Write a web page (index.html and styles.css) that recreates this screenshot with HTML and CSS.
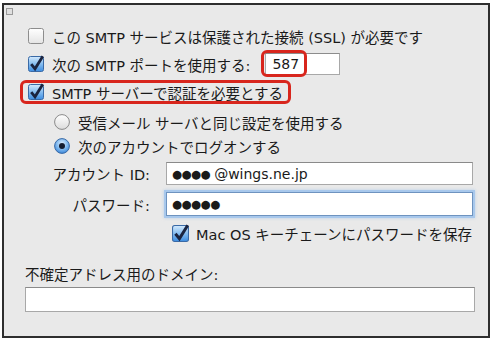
FILE: index.html
```html
<!DOCTYPE html>
<html lang="ja">
<head>
<meta charset="utf-8">
<link rel="stylesheet" href="styles.css">
</head>
<body>
<div class="window">
  <div class="titlebar"><span class="corner"></span></div>

  <div class="row r1">
    <svg class="cb" width="16" height="16" viewBox="0 0 16 16"><defs><linearGradient id="w1" x1="0" y1="0" x2="0" y2="1"><stop offset="0" stop-color="#ffffff"/><stop offset="1" stop-color="#e4e4e4"/></linearGradient></defs><rect x="0.5" y="0.5" width="15" height="15" rx="2" fill="url(#w1)" stroke="#8d8d8d"/></svg>
    <span>この SMTP サービスは保護された接続 (SSL) が必要です</span>
  </div>

  <div class="row r2">
    <svg class="cb" width="16" height="16" viewBox="0 0 16 16" overflow="visible"><defs><linearGradient id="b1" x1="0" y1="0" x2="0" y2="1"><stop offset="0" stop-color="#d4eafd"/><stop offset="0.5" stop-color="#86bdf0"/><stop offset="1" stop-color="#3c8ce0"/></linearGradient></defs><rect x="0.5" y="0.5" width="15" height="15" rx="2" fill="url(#b1)" stroke="#3a6aa6"/><path d="M3.2 8.2 L7 12.8 L14.8 0.2" stroke="#1a2440" stroke-width="2.8" fill="none" stroke-linejoin="miter"/></svg>
    <span>次の SMTP ポートを使用する:</span>
    <span class="port"><span class="port-hl"></span>587</span>
  </div>

  <div class="row r3">
    <div class="hl-box">
      <svg class="cb" width="16" height="16" viewBox="0 0 16 16" overflow="visible"><defs><linearGradient id="b2" x1="0" y1="0" x2="0" y2="1"><stop offset="0" stop-color="#d4eafd"/><stop offset="0.5" stop-color="#86bdf0"/><stop offset="1" stop-color="#3c8ce0"/></linearGradient></defs><rect x="0.5" y="0.5" width="15" height="15" rx="2" fill="url(#b2)" stroke="#3a6aa6"/><path d="M3.2 8.2 L7 12.8 L14.8 0.2" stroke="#1a2440" stroke-width="2.8" fill="none"/></svg>
      <span>SMTP サーバーで認証を必要とする</span>
    </div>
  </div>

  <div class="row r4">
    <svg class="rb" width="16" height="16" viewBox="0 0 16 16"><defs><linearGradient id="w2" x1="0" y1="0" x2="0" y2="1"><stop offset="0" stop-color="#ffffff"/><stop offset="1" stop-color="#dcdcdc"/></linearGradient></defs><circle cx="8" cy="8" r="7.4" fill="url(#w2)" stroke="#8a8a8a"/></svg>
    <span>受信メール サーバと同じ設定を使用する</span>
  </div>

  <div class="row r5">
    <svg class="rb" width="16" height="16" viewBox="0 0 16 16"><defs><radialGradient id="b3" cx="0.5" cy="0.35" r="0.7"><stop offset="0" stop-color="#e2f1ff"/><stop offset="0.55" stop-color="#7db7ee"/><stop offset="1" stop-color="#2f7fd6"/></radialGradient></defs><circle cx="8" cy="8" r="7.4" fill="url(#b3)" stroke="#3a6aa6"/><circle cx="8" cy="8" r="3" fill="#141c30"/></svg>
    <span>次のアカウントでログオンする</span>
  </div>

  <div class="row r6">
    <span class="label">アカウント ID:</span>
    <span class="field"><span class="dots">●●●●</span><span>@wings.ne.jp</span></span>
  </div>

  <div class="row r7">
    <span class="label">パスワード:</span>
    <span class="field focus"><span class="dots">●●●●●</span></span>
  </div>

  <div class="row r8">
    <svg class="cb" width="17" height="17" viewBox="0 0 16 16" overflow="visible"><defs><linearGradient id="b4" x1="0" y1="0" x2="0" y2="1"><stop offset="0" stop-color="#d4eafd"/><stop offset="0.5" stop-color="#86bdf0"/><stop offset="1" stop-color="#3c8ce0"/></linearGradient></defs><rect x="0.5" y="0.5" width="15" height="15" rx="2" fill="url(#b4)" stroke="#3a6aa6"/><path d="M3.2 8.2 L7 12.8 L14.8 0.2" stroke="#1a2440" stroke-width="2.8" fill="none"/></svg>
    <span>Mac OS キーチェーンにパスワードを保存</span>
  </div>

  <div class="row r9">
    <span>不確定アドレス用のドメイン:</span>
  </div>

  <div class="row r10">
    <span class="field wide"></span>
  </div>
</div>
</body>
</html>
```

FILE: styles.css
```css
html, body {
  margin: 0;
  padding: 0;
  background: #ffffff;
}

body {
  font-family: "DejaVu Sans", "Noto Sans CJK JP", sans-serif;
  font-size: 14.5px;
  color: #1a1a1a;
}

.window {
  box-sizing: border-box;
  width: 488px;
  height: 335px;
  margin: 3px 0 0 2px;
  border: 2px solid #2e2e2e;
  background: #e9e9e9;
  display: flex;
  flex-direction: column;
}

.titlebar {
  height: 19px;
  flex: none;
}

.corner {
  display: block;
  box-sizing: border-box;
  width: 7px;
  height: 7px;
  margin: 3px 0 0 2px;
  border: 1px solid #9a9a9a;
  background: #e0e0e0;
}

.row {
  display: flex;
  align-items: center;
  flex: none;
  white-space: nowrap;
}

.cb, .rb {
  flex: none;
  overflow: visible;
}

.r1 {
  height: 24px;
  padding-left: 24px;
  gap: 8px;
}

.r2 {
  height: 26px;
  margin-top: 3px;
  padding-left: 24px;
  gap: 8px;
}

.port {
  position: relative;
  box-sizing: border-box;
  width: 75px;
  height: 22px;
  margin-left: 7px;
  padding-left: 6px;
  border: 1px solid #a8a8a8;
  border-top-color: #8c8c8c;
  background: #ffffff;
  font-size: 14px;
  line-height: 20px;
}

.port-hl {
  position: absolute;
  left: -5px;
  top: -4px;
  box-sizing: border-box;
  width: 46px;
  height: 27px;
  border: 3px solid #d8261d;
  border-radius: 6px;
}

.r3 {
  height: 24px;
  margin-top: 3px;
  padding-left: 16px;
}

.hl-box {
  box-sizing: border-box;
  height: 24px;
  display: flex;
  align-items: center;
  gap: 8px;
  padding: 0 5px 0 5px;
  border: 3px solid #d8261d;
  border-radius: 6px;
}

.r4 {
  height: 24px;
  margin-top: 6px;
  padding-left: 50px;
  gap: 8px;
}

.r5 {
  height: 24px;
  padding-left: 50px;
  gap: 8px;
}

.label {
  box-sizing: border-box;
  width: 146px;
  text-align: right;
  flex: none;
}

.field {
  box-sizing: border-box;
  display: flex;
  align-items: center;
  width: 307px;
  height: 23px;
  margin-left: 16px;
  padding-left: 5px;
  border: 1px solid #a8a8a8;
  border-top-color: #8a8a8a;
  background: #ffffff;
  font-size: 14px;
}

.dots {
  font-size: 11.5px;
  letter-spacing: -0.5px;
  margin-right: 4px;
}

.r6 {
  height: 23px;
  margin-top: 4px;
}

.r7 {
  height: 24px;
  margin-top: 7px;
}

.field.focus {
  height: 24px;
  border: 1px solid #6e93bf;
  box-shadow: 0 0 0 2px #a8c8ec, 0 0 3px 2px rgba(150, 190, 235, 0.6);
}

.r8 {
  height: 24px;
  margin-top: 5px;
  padding-left: 168px;
  gap: 7px;
}

.r9 {
  height: 20px;
  margin-top: 18px;
  padding-left: 21px;
}

.r10 {
  margin-top: 4px;
}

.field.wide {
  width: 450px;
  height: 25px;
  margin-left: 21px;
}
```
